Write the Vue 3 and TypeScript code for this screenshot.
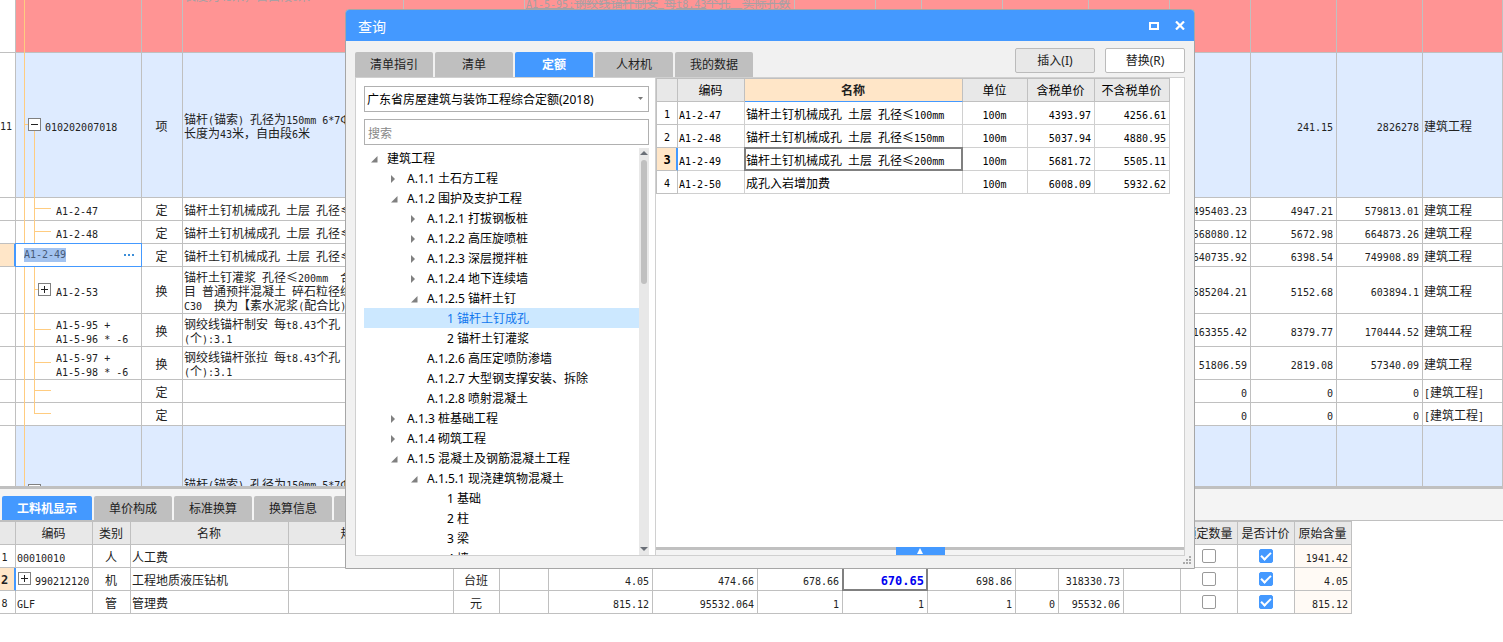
<script setup lang="ts">
import { h, ref } from 'vue'
import type { FunctionalComponent } from 'vue'

/* Sets Latin runs in half-width cells and CJK runs in full-width cells. */
const GridText: FunctionalComponent<{ text: string }> = (props) =>
  (props.text.match(/[\x20-\x7e\n]+|[^\x20-\x7e\n]+/g) ?? []).map((run) =>
    h('span', { class: run.charCodeAt(0) < 127 ? 'half' : 'full' }, run),
  )
GridText.props = ['text']

interface BillRow {
  no?: string
  kind: string
  code?: string
  node: 'item' | 'leaf' | 'sub' | 'last' | 'edit' | 'deleted'
  type: string
  name: string
  note?: string
  cost?: string
  price?: string
  total?: string
  major?: string
}

const billCols = [16, 126, 41, 221, 121, 270, 81, 46, 81, 86, 81, 81, 86, 86]

const billRows: BillRow[] = [
  { kind: 'deleted', node: 'deleted', type: '', name: '长度为43米，自由段6米', note: 'A1-5-95:钢绞线锚杆制安 每t8.43个孔  实际孔数' },
  { no: '11', kind: 'item', node: 'item', code: '010202007018', type: '项', name: '锚杆(锚索) 孔径为150mm 6*7Φ\n长度为43米，自由段6米', price: '241.15', total: '2826278', major: '建筑工程' },
  { kind: 'one', node: 'leaf', code: 'A1-2-47', type: '定', name: '锚杆土钉机械成孔 土层 孔径≤', cost: '495403.23', price: '4947.21', total: '579813.01', major: '建筑工程' },
  { kind: 'one', node: 'leaf', code: 'A1-2-48', type: '定', name: '锚杆土钉机械成孔 土层 孔径≤', cost: '568080.12', price: '5672.98', total: '664873.26', major: '建筑工程' },
  { kind: 'one', node: 'edit', code: 'A1-2-49', type: '定', name: '锚杆土钉机械成孔 土层 孔径≤', cost: '640735.92', price: '6398.54', total: '749908.89', major: '建筑工程' },
  { kind: 'three', node: 'sub', code: 'A1-2-53', type: '换', name: '锚杆土钉灌浆 孔径≤200mm  合\n目 普通预拌混凝土 碎石粒径综\nC30  换为【素水泥浆(配合比)', cost: '585204.21', price: '5152.68', total: '603894.1', major: '建筑工程' },
  { kind: 'two', node: 'leaf', code: 'A1-5-95 +\nA1-5-96 * -6', type: '换', name: '钢绞线锚杆制安 每t8.43个孔\n(个):3.1', cost: '163355.42', price: '8379.77', total: '170444.52', major: '建筑工程' },
  { kind: 'two', node: 'leaf', code: 'A1-5-97 +\nA1-5-98 * -6', type: '换', name: '钢绞线锚杆张拉 每t8.43个孔\n(个):3.1', cost: '51806.59', price: '2819.08', total: '57340.09', major: '建筑工程' },
  { kind: 'one', node: 'leaf', type: '定', name: '', cost: '0', price: '0', total: '0', major: '[建筑工程]' },
  { kind: 'one', node: 'last', type: '定', name: '', cost: '0', price: '0', total: '0', major: '[建筑工程]' },
  { kind: 'item next', node: 'item', type: '', name: '锚杆(锚索) 孔径为150mm 5*7Φ\n ' },
]

const detailTabs = ['工料机显示', '单价构成', '标准换算', '换算信息', '']
const detailCols = [16, 77, 38, 158, 165, 46, 49, 104, 105, 85, 85, 88, 43, 65, 57, 57, 57, 57]
const detailHeads = ['', '编码', '类别', '名称', '规格及型号', '', '', '', '', '', '', '', '', '', '', '锁定数量', '是否计价', '原始含量']

interface DetailRow {
  no: string
  code: string
  type: string
  name: string
  unit: string
  nums: string[]
  locked: boolean
  priced: boolean
  origin: string
}
const detailRows = ref<DetailRow[]>([
  { no: '1', code: '00010010', type: '人', name: '人工费', unit: '', nums: ['', '', '', '', '', '', '', '', ''], locked: false, priced: true, origin: '1941.42' },
  { no: '2', code: '990212120', type: '机', name: '工程地质液压钻机', unit: '台班', nums: ['', '4.05', '474.66', '678.66', '670.65', '698.86', '', '318330.73', ''], locked: false, priced: true, origin: '4.05' },
  { no: '8', code: 'GLF', type: '管', name: '管理费', unit: '元', nums: ['', '815.12', '95532.064', '1', '1', '1', '0', '95532.06', ''], locked: false, priced: true, origin: '815.12' },
])

const dialogTabs = ['清单指引', '清单', '定额', '人材机', '我的数据']
const activeTab = ref('定额')
const library = ref('2018')
const keyword = ref('')

interface TreeNode {
  level: number
  text: string
  state: 'open' | 'closed' | 'leaf'
}
const tree: TreeNode[] = [
  { level: 0, text: '建筑工程', state: 'open' },
  { level: 1, text: 'A.1.1 土石方工程', state: 'closed' },
  { level: 1, text: 'A.1.2 围护及支护工程', state: 'open' },
  { level: 2, text: 'A.1.2.1 打拔钢板桩', state: 'closed' },
  { level: 2, text: 'A.1.2.2 高压旋喷桩', state: 'closed' },
  { level: 2, text: 'A.1.2.3 深层搅拌桩', state: 'closed' },
  { level: 2, text: 'A.1.2.4 地下连续墙', state: 'closed' },
  { level: 2, text: 'A.1.2.5 锚杆土钉', state: 'open' },
  { level: 3, text: '1 锚杆土钉成孔', state: 'leaf' },
  { level: 3, text: '2 锚杆土钉灌浆', state: 'leaf' },
  { level: 2, text: 'A.1.2.6 高压定喷防渗墙', state: 'leaf' },
  { level: 2, text: 'A.1.2.7 大型钢支撑安装、拆除', state: 'leaf' },
  { level: 2, text: 'A.1.2.8 喷射混凝土', state: 'leaf' },
  { level: 1, text: 'A.1.3 桩基础工程', state: 'closed' },
  { level: 1, text: 'A.1.4 砌筑工程', state: 'closed' },
  { level: 1, text: 'A.1.5 混凝土及钢筋混凝土工程', state: 'open' },
  { level: 2, text: 'A.1.5.1 现浇建筑物混凝土', state: 'open' },
  { level: 3, text: '1 基础', state: 'leaf' },
  { level: 3, text: '2 柱', state: 'leaf' },
  { level: 3, text: '3 梁', state: 'leaf' },
  { level: 3, text: '4 墙', state: 'leaf' },
]
const selectedNode = ref('1 锚杆土钉成孔')

const quotaCols = [21, 67, 218, 65, 67, 75]
const quotaHeads = ['', '编码', '名称', '单位', '含税单价', '不含税单价']
const quotas = [
  { code: 'A1-2-47', name: '锚杆土钉机械成孔 土层 孔径≤100mm', unit: '100m', taxed: '4393.97', untaxed: '4256.61' },
  { code: 'A1-2-48', name: '锚杆土钉机械成孔 土层 孔径≤150mm', unit: '100m', taxed: '5037.94', untaxed: '4880.95' },
  { code: 'A1-2-49', name: '锚杆土钉机械成孔 土层 孔径≤200mm', unit: '100m', taxed: '5681.72', untaxed: '5505.11' },
  { code: 'A1-2-50', name: '成孔入岩增加费', unit: '100m', taxed: '6008.09', untaxed: '5932.62' },
]
const currentQuota = ref('A1-2-49')
</script>

<template>
  <div class="workspace">
    <section class="bill">
      <table class="grid bill-grid">
        <colgroup>
          <col v-for="(w, i) in billCols" :key="i" :style="{ width: w + 'px' }" />
          <col />
        </colgroup>
        <tbody>
          <tr v-for="(row, r) in billRows" :key="r" :class="row.kind">
            <th class="rowno" :class="{ current: row.node === 'edit' }"><GridText :text="row.no ?? ''" /></th>
            <td class="code" :class="row.node">
              <div v-if="row.node === 'edit'" class="editor">
                <input type="text" :value="row.code" aria-label="编码" />
                <button type="button" class="more" aria-label="更多">
                  <svg width="10" height="2" viewBox="0 0 10 2"><path d="M0 0h2v2H0zM4 0h2v2H4zM8 0h2v2H8z" fill="#3c8ed8" /></svg>
                </button>
              </div>
              <template v-else>
                <button v-if="row.node === 'item'" type="button" class="toggle" aria-label="折叠">
                  <svg width="11" height="11" viewBox="0 0 11 11"><path d="M2 5h7v1H2z" fill="#222" /></svg>
                </button>
                <button v-if="row.node === 'sub'" type="button" class="toggle" aria-label="展开">
                  <svg width="11" height="11" viewBox="0 0 11 11"><path d="M2 5h7v1H2zM5 2h1v7H5z" fill="#222" /></svg>
                </button>
                <GridText :text="row.code ?? ''" />
              </template>
            </td>
            <td class="center"><GridText :text="row.type" /></td>
            <td class="name"><GridText :text="row.name" /></td>
            <td></td>
            <td class="note"><GridText :text="row.note ?? ''" /></td>
            <td v-for="n in 5" :key="n"></td>
            <td class="num"><GridText :text="row.cost ?? ''" /></td>
            <td class="num"><GridText :text="row.price ?? ''" /></td>
            <td class="num"><GridText :text="row.total ?? ''" /></td>
            <td><GridText :text="row.major ?? ''" /></td>
          </tr>
        </tbody>
      </table>
    </section>

    <section class="detail">
      <nav class="tabs detail-tabs">
        <button v-for="(t, i) in detailTabs" :key="i" type="button" class="tab" :class="{ active: i === 0 }">{{ t }}</button>
      </nav>
      <table class="grid detail-grid">
        <colgroup>
          <col v-for="(w, i) in detailCols" :key="i" :style="{ width: w + 'px' }" />
        </colgroup>
        <thead>
          <tr>
            <th v-for="(t, i) in detailHeads" :key="i">{{ t }}</th>
          </tr>
        </thead>
        <tbody>
          <tr v-for="(row, r) in detailRows" :key="row.no">
            <th class="rowno" :class="{ current: r === 1 }"><GridText :text="row.no" /></th>
            <td class="resource" :class="{ nested: r === 1 }">
              <button v-if="r === 1" type="button" class="toggle" aria-label="展开">
                <svg width="11" height="11" viewBox="0 0 11 11"><path d="M2 5h7v1H2zM5 2h1v7H5z" fill="#222" /></svg>
              </button>
              <GridText :text="row.code" />
            </td>
            <td class="center">{{ row.type }}</td>
            <td>{{ row.name }}</td>
            <td></td>
            <td class="center">{{ row.unit }}</td>
            <td v-for="(n, i) in row.nums" :key="i" class="num" :class="{ picked: r === 1 && i === 4 }"><GridText :text="n" /></td>
            <td class="check"><input v-model="row.locked" type="checkbox" aria-label="锁定数量" /></td>
            <td class="check"><input v-model="row.priced" type="checkbox" aria-label="是否计价" /></td>
            <td class="num origin"><GridText :text="row.origin" /></td>
          </tr>
        </tbody>
      </table>
    </section>

    <div class="dialog" role="dialog" aria-labelledby="dialog-title">
      <header class="titlebar">
        <h1 id="dialog-title">查询</h1>
        <button type="button" aria-label="最大化">
          <svg width="10" height="8" viewBox="0 0 10 8"><path d="M1 1h8v6H1z" fill="none" stroke="#fff" stroke-width="2" /></svg>
        </button>
        <button type="button" aria-label="关闭">
          <svg width="10" height="9" viewBox="0 0 10 9"><path d="M1 0.5l8 8M9 0.5l-8 8" fill="none" stroke="#fff" stroke-width="2.2" /></svg>
        </button>
      </header>

      <div class="toolbar">
        <nav class="tabs">
          <button v-for="t in dialogTabs" :key="t" type="button" class="tab" :class="{ active: t === activeTab }" @click="activeTab = t">{{ t }}</button>
        </nav>
        <div class="actions">
          <button type="button" class="action muted">插入(I)</button>
          <button type="button" class="action">替换(R)</button>
        </div>
      </div>

      <div class="content">
        <aside class="side">
          <div class="combo">
            <select v-model="library" aria-label="定额库">
              <option value="2018">广东省房屋建筑与装饰工程综合定额(2018)</option>
            </select>
            <svg width="5" height="3" viewBox="0 0 5 3"><path d="M0 0h5L2.5 3z" fill="#777" /></svg>
          </div>
          <input v-model="keyword" class="search" type="text" placeholder="搜索" aria-label="搜索" />
          <div class="tree-box">
            <ul class="tree">
              <li v-for="node in tree" :key="node.text" :class="['lv' + node.level, { selected: node.text === selectedNode }]" @click="selectedNode = node.text">
                <span class="arrow">
                  <svg v-if="node.state === 'open'" width="7" height="7" viewBox="0 0 7 7"><path d="M6.5 0v6.5H0z" fill="#808080" /></svg>
                  <svg v-if="node.state === 'closed'" width="5" height="8" viewBox="0 0 5 8"><path d="M0 0L4 4 0 8z" fill="#808080" /></svg>
                </span>{{ node.text }}
              </li>
            </ul>
            <div class="scrollbar">
              <svg width="8" height="4" viewBox="0 0 8 4"><path d="M0 4h8L4 0z" fill="#6b7078" /></svg>
              <span class="thumb"></span>
              <svg width="8" height="4" viewBox="0 0 8 4"><path d="M0 0h8L4 4z" fill="#6b7078" /></svg>
            </div>
          </div>
        </aside>

        <div class="main">
          <div class="result">
            <table class="grid quota-grid">
              <colgroup>
                <col v-for="(w, i) in quotaCols" :key="i" :style="{ width: w + 'px' }" />
              </colgroup>
              <thead>
                <tr>
                  <th v-for="(t, i) in quotaHeads" :key="i" :class="{ sorted: i === 2 }">{{ t }}</th>
                </tr>
              </thead>
              <tbody>
                <tr v-for="(q, i) in quotas" :key="q.code" @click="currentQuota = q.code">
                  <th class="rowno" :class="{ current: q.code === currentQuota }"><GridText :text="String(i + 1)" /></th>
                  <td><GridText :text="q.code" /></td>
                  <td :class="{ picked: q.code === currentQuota }"><GridText :text="q.name" /></td>
                  <td class="center"><GridText :text="q.unit" /></td>
                  <td class="num"><GridText :text="q.taxed" /></td>
                  <td class="num"><GridText :text="q.untaxed" /></td>
                </tr>
              </tbody>
            </table>
          </div>
          <div class="splitter">
            <button type="button" aria-label="展开下方面板">
              <svg width="6" height="6" viewBox="0 0 6 6"><path d="M3 0l3 6H0z" fill="#fff" /></svg>
            </button>
          </div>
        </div>
      </div>
      <svg class="grip" width="8" height="8" viewBox="0 0 8 8"><path d="M6 0h2v2H6zM3 3h2v2H3zM6 3h2v2H6zM0 6h2v2H0zM3 6h2v2H3zM6 6h2v2H6z" fill="#aaa" /></svg>
    </div>
  </div>
</template>

<style>
body {
  background: #fff;
}
</style>

<style scoped>
.workspace,
.workspace *,
.workspace *::before,
.workspace *::after {
  box-sizing: border-box;
}
.workspace {
  position: relative;
  display: flex;
  flex-direction: column;
  height: 100vh;
  overflow: hidden;
  color: #222;
  font: 12px/14px "Noto Sans CJK SC", sans-serif;
}
button,
input,
select {
  margin: 0;
  padding: 0;
  border: 0;
  background: none;
  color: inherit;
  font: inherit;
}
svg {
  display: block;
}

/* Shared grid look */
.grid {
  table-layout: fixed;
  border-collapse: separate;
  border-spacing: 0;
}
.grid th,
.grid td {
  height: 23px;
  padding: 1px 3px 0 1px;
  border: 0 solid #c0c0c0;
  border-width: 0 1px 1px 0;
  font-weight: 400;
  text-align: left;
  white-space: pre;
}
.grid :deep(.half) {
  font-family: "DejaVu Sans Mono", monospace;
  font-size: 10px;
  line-height: 0;
}
.grid thead th {
  padding: 0 1px 0 0;
  background: #e8e8e8;
  text-align: center;
}
.grid .center {
  padding: 1px 1px 0 0;
  text-align: center;
}
.grid .check {
  padding: 0;
}
.grid .num {
  text-align: right;
}
.grid .rowno {
  padding: 0 6px 0 0;
  background: #fff;
  text-align: center;
}
.grid .rowno.current {
  background: #ffe6c8;
  box-shadow: inset -1px 0 #4499ff;
  border-right-color: #4499ff;
  font-weight: 700;
}
.picked {
  position: relative;
}
.picked::after {
  content: "";
  position: absolute;
  inset: -1px;
  border: 2px solid #808080;
}
.toggle {
  width: 13px;
  height: 13px;
  border: 1px solid #808080;
  background: #fff;
}

/* Bill of quantities */
.bill {
  flex: 1;
  min-height: 0;
  overflow: hidden;
}
.bill-grid {
  width: 100%;
  margin-top: -74px;
}
.bill-grid td {
  overflow: hidden;
}
.deleted td {
  height: 127px;
  background: #ff9494;
  color: #a8a0a4;
}
.grid .deleted .name {
  padding-top: 14px;
}
.grid .deleted .note {
  padding-top: 28px;
  text-decoration: line-through;
}
.item td {
  height: 145px;
  background: #deebff;
}
.next td {
  height: 130px;
}
.three td {
  height: 47px;
}
.two td {
  height: 33px;
}
.grid .code {
  position: relative;
  overflow: visible;
  padding-left: 40px;
}
.grid .code.item {
  padding-left: 29px;
}
.code::before {
  content: "";
  position: absolute;
  top: 0;
  bottom: -1px;
  left: 8px;
  width: 11px;
  border-left: 1px solid #ffcc80;
  border-right: 1px solid #ffcc80;
}
.code.item::before,
.code.deleted::before {
  border-right: 0;
}
.code::after {
  content: "";
  position: absolute;
  top: calc(50% - 1px);
  left: 18px;
  width: 17px;
  border-top: 1px solid #ffcc80;
}
.code.item::after {
  bottom: -1px;
  left: 8px;
  width: 11px;
  border-right: 1px solid #ffcc80;
}
.code.deleted::after {
  display: none;
}
.code.last::before {
  border-right: 0;
}
.code.last::after {
  top: 0;
  height: 11px;
  border-top: 0;
  border-bottom: 1px solid #ffcc80;
  border-left: 1px solid #ffcc80;
}
.code .toggle {
  position: absolute;
  z-index: 1;
  top: calc(50% - 7px);
  left: 12px;
}
.code.sub .toggle {
  left: 22px;
}
.editor {
  position: absolute;
  z-index: 2;
  inset: -1px;
  display: flex;
  align-items: center;
  justify-content: space-between;
  padding: 0 7px 1px 8px;
  border: 1px solid #4499ff;
  background: #fff;
}
.editor input {
  width: 42px;
  height: 14px;
  background: #a3c3f0;
  color: #465a78;
  font: 10px/14px "DejaVu Sans Mono", monospace;
}

/* Tabs */
.tabs {
  display: flex;
  gap: 2px;
}
.tab {
  width: 78px;
  height: 25px;
  border-radius: 2px 2px 0 0;
  background: #bfbfbf;
  color: #222;
}
.tab.active {
  background: #4499ff;
  color: #fff;
  font-weight: 700;
}

/* Resource detail */
.detail {
  flex: none;
  padding-bottom: 28px;
  border-top: 3px solid #c0c0c0;
  background: #fff;
}
.detail-tabs {
  padding: 7px 2px 0;
  border-bottom: 1px solid #c0c0c0;
  background: #f4f4f4;
}
.detail-tabs .tab {
  height: 24px;
}
.detail-tabs .active {
  width: 90px;
}
.detail-grid {
  width: 1px;
}
.detail-grid thead th {
  height: 24px;
  border-top-width: 1px;
}
.grid .nested {
  position: relative;
  padding-left: 19px;
}
.resource .toggle {
  position: absolute;
  top: 4px;
  left: 2px;
}
.detail-grid .picked {
  color: #0000f0;
  font-weight: 700;
}
.detail-grid .current :deep(.half),
.detail-grid .picked :deep(.half) {
  font-size: 12px;
}
.detail-grid .origin {
  background: #fffaf5;
}
input[type="checkbox"] {
  display: block;
  width: 14px;
  height: 14px;
  margin: 0 auto;
  appearance: none;
  border: 1px solid #999;
  border-radius: 2px;
  background: #fff;
}
input[type="checkbox"]:checked {
  border-color: #4499ff;
  background: #4499ff;
}
input[type="checkbox"]:checked::before {
  content: "";
  display: block;
  width: 10px;
  height: 6px;
  margin: 2px 1px;
  border: 2px solid #fff;
  border-width: 0 0 2px 2px;
  transform: rotate(-45deg);
}

/* Query dialog */
.dialog {
  position: absolute;
  z-index: 5;
  top: 9px;
  left: 345px;
  display: flex;
  flex-direction: column;
  width: 850px;
  max-width: 100%;
  height: 560px;
  border: 1px solid #a6a6a6;
  border-radius: 4px 4px 0 0;
  background: #f1f1f1;
  color: #000;
  font-family: "Noto Sans", "Noto Sans CJK SC", sans-serif;
}
.titlebar {
  display: flex;
  align-items: center;
  gap: 16px;
  height: 31px;
  padding: 0 9px 0 12px;
  border-radius: 3px 3px 0 0;
  background: #4499ff;
  color: #fff;
}
.titlebar h1 {
  flex: 1;
  margin: 2px 0 0;
  font-size: 14px;
  font-weight: 400;
  line-height: 20px;
}
.toolbar {
  display: flex;
  align-items: flex-end;
  justify-content: space-between;
  height: 36px;
  padding: 0 9px;
}
.actions {
  display: flex;
  gap: 10px;
  padding-bottom: 4px;
}
.action {
  width: 80px;
  height: 25px;
  border: 1px solid #bbb;
  border-radius: 2px;
  background: #fff;
  color: #222;
}
.action.muted {
  background: #e8e8e8;
}
.content {
  display: flex;
  flex: 1;
  min-height: 0;
  margin: 0 9px 12px;
  border: 1px solid #d0d0d0;
  background: #fff;
}
.side {
  display: flex;
  flex: none;
  flex-direction: column;
  width: 300px;
  padding: 8px 6px 0 8px;
  border-right: 1px solid #d0d0d0;
}
.combo {
  position: relative;
  flex: none;
  height: 26px;
}
.combo select {
  width: 100%;
  height: 100%;
  padding: 2px 2px 0;
  appearance: none;
  border: 1px solid #b0b0b0;
  background: #fff;
}
.combo svg {
  position: absolute;
  top: 11px;
  right: 6px;
}
.search {
  flex: none;
  height: 26px;
  margin: 7px 0 3px;
  padding: 2px 3px 0;
  border: 1px solid #b0b0b0;
}
.search::placeholder {
  color: #888;
}
.tree-box {
  display: flex;
  flex: 1;
  min-height: 0;
}
.tree {
  flex: 1;
  margin: 0;
  padding: 0;
  overflow: hidden;
  list-style: none;
}
.tree li {
  display: flex;
  align-items: center;
  height: 20px;
  padding: 2px 0 0 7px;
  white-space: nowrap;
}
.tree .lv1 {
  padding-left: 27px;
}
.tree .lv2 {
  padding-left: 47px;
}
.tree .lv3 {
  padding-left: 67px;
}
.tree .selected {
  background: #cce8ff;
  color: #1177ee;
}
.arrow {
  width: 16px;
}
.scrollbar {
  display: flex;
  flex-direction: column;
  align-items: center;
  width: 10px;
  padding: 3px 0 4px;
  background: #e8e8e8;
}
.thumb {
  width: 6px;
  height: 124px;
  margin: 5px 0 auto;
  border-radius: 3px;
  background: #c0c0c0;
}
.main {
  display: flex;
  flex: 1;
  flex-direction: column;
  min-width: 0;
}
.result {
  flex: 1;
  overflow: hidden;
}
.quota-grid {
  width: 1px;
  border-top: 1px solid #c0c0c0;
  border-left: 1px solid #c0c0c0;
  font-family: "Noto Sans CJK SC", sans-serif;
}
.quota-grid td {
  border-color: #d0d0d0;
}
.quota-grid .rowno {
  padding: 0;
}
.quota-grid thead .sorted {
  border-bottom-color: #4499ff;
  background: #ffe6c8;
  color: #222;
  font-weight: 700;
}
.quota-grid .current :deep(.half) {
  font-size: 12px;
}
.splitter {
  display: flex;
  justify-content: center;
  height: 8px;
  border-top: 3px solid #c0c0c0;
  background: #f4f4f4;
}
.splitter button {
  display: flex;
  align-items: center;
  justify-content: center;
  width: 49px;
  height: 8px;
  margin-top: -3px;
  background: #4499ff;
}
.grip {
  position: absolute;
  right: 3px;
  bottom: 4px;
}
</style>
